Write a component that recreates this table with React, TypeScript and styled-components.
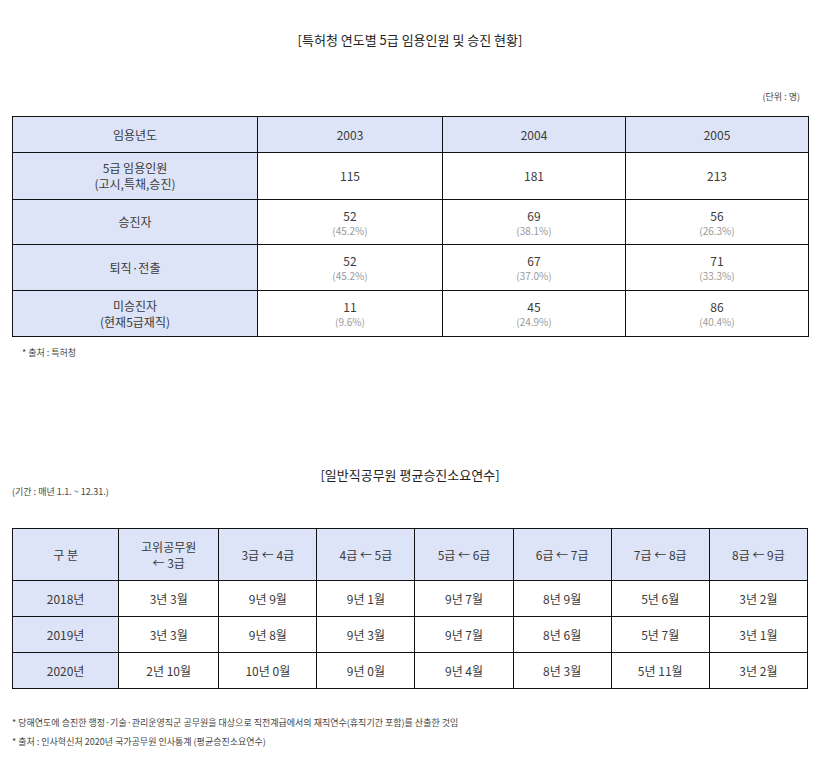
import React from 'react';
import styled, { createGlobalStyle } from 'styled-components';

const GlobalStyle = createGlobalStyle`
  body {
    margin: 0;
    background: #fff;
    color: #222;
    font-family: 'Noto Sans CJK KR', 'Noto Sans', sans-serif;
  }
`;

const Page = styled.div`
  width: 796px;
  padding: 30px 0 0 12px;
`;

const Title = styled.h2<{ $top: number }>`
  margin: ${({ $top }) => $top}px 0 0;
  font-size: 13px;
  font-weight: 400;
  line-height: 20px;
  text-align: center;
  color: #222;
`;

const Note = styled.div<{ $align?: string; $top: number }>`
  margin-top: ${({ $top }) => $top}px;
  font-size: 9px;
  line-height: 14px;
  color: #444;
  text-align: ${({ $align }) => $align || 'left'};
  padding: 0 ${({ $align }) => ($align === 'right' ? '8px' : '0')} 0
    ${({ $align }) => ($align === 'left-indent' ? '10px' : '0')};
`;

const Table = styled.table<{ $top: number }>`
  width: 796px;
  margin-top: ${({ $top }) => $top}px;
  border-collapse: collapse;
  table-layout: fixed;
  font-size: 12px;
`;

const Cell = styled.td<{ $head?: boolean; $h: number }>`
  height: ${({ $h }) => $h - 1}px;
  padding: 0;
  border: 1px solid #111;
  text-align: center;
  vertical-align: middle;
  line-height: 16px;
  color: #3a3a3a;
  background: ${({ $head }) => ($head ? '#dde4f7' : '#fff')};
`;

const Pct = styled.div`
  font-size: 10px;
  line-height: 13px;
  color: #9a9a9a;
`;

const Footnotes = styled.div`
  margin-top: 27px;
  display: flex;
  flex-direction: column;
  gap: 5px;
  font-size: 9px;
  line-height: 14px;
  color: #444;
`;

type Stat = { n: string; p: string };

const hireRows: { label: React.ReactNode; h: number; cells: Stat[] }[] = [
  {
    label: (
      <>
        5급 임용인원
        <br />
        (고시,특채,승진)
      </>
    ),
    h: 47,
    cells: [
      { n: '115', p: '' },
      { n: '181', p: '' },
      { n: '213', p: '' }
    ]
  },
  {
    label: '승진자',
    h: 45,
    cells: [
      { n: '52', p: '(45.2%)' },
      { n: '69', p: '(38.1%)' },
      { n: '56', p: '(26.3%)' }
    ]
  },
  {
    label: '퇴직·전출',
    h: 46,
    cells: [
      { n: '52', p: '(45.2%)' },
      { n: '67', p: '(37.0%)' },
      { n: '71', p: '(33.3%)' }
    ]
  },
  {
    label: (
      <>
        미승진자
        <br />
        (현재5급재직)
      </>
    ),
    h: 46,
    cells: [
      { n: '11', p: '(9.6%)' },
      { n: '45', p: '(24.9%)' },
      { n: '86', p: '(40.4%)' }
    ]
  }
];

const gradeHeads: React.ReactNode[] = [
  <>
    고위공무원
    <br />← 3급
  </>,
  '3급 ← 4급',
  '4급 ← 5급',
  '5급 ← 6급',
  '6급 ← 7급',
  '7급 ← 8급',
  '8급 ← 9급'
];

const yearRows: { year: string; values: string[] }[] = [
  { year: '2018년', values: ['3년 3월', '9년 9월', '9년 1월', '9년 7월', '8년 9월', '5년 6월', '3년 2월'] },
  { year: '2019년', values: ['3년 3월', '9년 8월', '9년 3월', '9년 7월', '8년 6월', '5년 7월', '3년 1월'] },
  { year: '2020년', values: ['2년 10월', '10년 0월', '9년 0월', '9년 4월', '8년 3월', '5년 11월', '3년 2월'] }
];

export default function App() {
  return (
    <>
      <GlobalStyle />
      <Page>
        <Title $top={0}>[특허청 연도별 5급 임용인원 및 승진 현황]</Title>
        <Note $align="right" $top={40}>
          (단위 : 명)
        </Note>
        <Table $top={12}>
          <colgroup>
            <col style={{ width: 245 }} />
            <col style={{ width: 185 }} />
            <col style={{ width: 183 }} />
            <col style={{ width: 183 }} />
          </colgroup>
          <tbody>
            <tr>
              <Cell $head $h={36}>임용년도</Cell>
              <Cell $head $h={36}>2003</Cell>
              <Cell $head $h={36}>2004</Cell>
              <Cell $head $h={36}>2005</Cell>
            </tr>
            {hireRows.map((row, i) => (
              <tr key={i}>
                <Cell $head $h={row.h}>{row.label}</Cell>
                {row.cells.map((c, j) => (
                  <Cell key={j} $h={row.h}>
                    {c.n}
                    {c.p && <Pct>{c.p}</Pct>}
                  </Cell>
                ))}
              </tr>
            ))}
          </tbody>
        </Table>
        <Note $align="left-indent" $top={9}>
          * 출처 : 특허청
        </Note>

        <Title $top={105}>[일반직공무원 평균승진소요연수]</Title>
        <Note $top={0}>(기간 : 매년 1.1. ~ 12.31.)</Note>
        <Table $top={29}>
          <colgroup>
            <col style={{ width: 106 }} />
            {gradeHeads.map((_, i) => (
              <col key={i} style={{ width: i === 0 ? 100 : 98 }} />
            ))}
          </colgroup>
          <tbody>
            <tr>
              <Cell $head $h={52}>구 분</Cell>
              {gradeHeads.map((g, i) => (
                <Cell key={i} $head $h={52}>
                  {g}
                </Cell>
              ))}
            </tr>
            {yearRows.map(r => (
              <tr key={r.year}>
                <Cell $head $h={36}>{r.year}</Cell>
                {r.values.map((v, i) => (
                  <Cell key={i} $h={36}>
                    {v}
                  </Cell>
                ))}
              </tr>
            ))}
          </tbody>
        </Table>
        <Footnotes>
          <span>* 당해연도에 승진한 행정·기술·관리운영직군 공무원을 대상으로 직전계급에서의 재직연수(휴직기간 포함)를 산출한 것임</span>
          <span>* 출처 : 인사혁신처 2020년 국가공무원 인사통계 (평균승진소요연수)</span>
        </Footnotes>
      </Page>
    </>
  );
}
